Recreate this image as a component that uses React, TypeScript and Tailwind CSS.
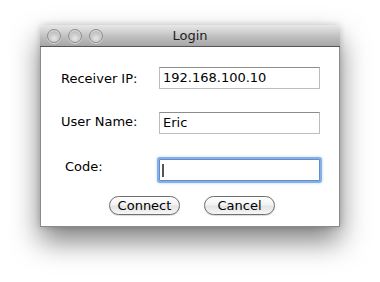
import React from "react";

const font = { fontFamily: '"DejaVu Sans", "Liberation Sans", sans-serif' };

function Light() {
  return (
    <div className="w-[14px] h-[14px] rounded-full border border-[#8e8e8e] bg-[radial-gradient(circle_at_50%_70%,#e6e6e6_0%,#c4c4c4_55%,#a9a9a9_100%)] shadow-[inset_0_1px_1px_rgba(255,255,255,0.6),0_1px_0_rgba(255,255,255,0.5)]" />
  );
}

function Field({ children, focused }: { children?: React.ReactNode; focused?: boolean }) {
  if (focused) {
    return (
      <div className="w-[161px] h-[22px] bg-white border border-[#5f8fd3] rounded-[1px] shadow-[0_0_0_2px_rgba(122,167,224,0.85),0_0_3px_2px_rgba(122,167,224,0.5)] flex items-center pl-[2px]">
        <div className="w-[2px] h-[13px] bg-[#555]" />
      </div>
    );
  }
  return (
    <div className="w-[161px] h-[22px] bg-white border border-[#bcbcbc] border-t-[#8c8c8c] flex items-center pl-[3px] text-[13px] leading-4 text-black">
      {children}
    </div>
  );
}

function Button({ label }: { label: string }) {
  return (
    <div className="w-[71px] h-[19px] rounded-full border border-[#6e6e6e] bg-[linear-gradient(#ffffff_0%,#f3f3f3_45%,#e4e4e4_55%,#f6f6f6_100%)] shadow-[0_1px_1px_rgba(0,0,0,0.15)] flex items-center justify-center text-[13px] leading-4 text-black">
      {label}
    </div>
  );
}

export default function App() {
  return (
    <div className="w-[380px] h-[282px] bg-white pt-[25px] pl-[40px]" style={font}>
      <div className="w-[300px] h-[202px] flex flex-col rounded-t-[4px] shadow-[0_14px_28px_rgba(0,0,0,0.5),0_0_6px_rgba(0,0,0,0.18)]">
        <div className="relative h-[22px] rounded-t-[4px] bg-[linear-gradient(#e8e8e8,#bdbdbd_60%,#a6a6a6)] border-b border-[#555] flex items-center pl-[7px] gap-[7px]">
          <Light />
          <Light />
          <Light />
          <div className="absolute inset-0 flex items-center justify-center text-[13px] leading-4 text-[#1e1e1e] pt-[1px]">
            Login
          </div>
        </div>
        <div className="flex-1 bg-white border-x border-b border-[#8a8a8a] flex flex-col pt-[20px]">
          <div className="flex items-start">
            <div className="w-[118px] pl-[20px] mt-[4px] text-[13px] leading-4 text-black">Receiver IP:</div>
            <Field>192.168.100.10</Field>
          </div>
          <div className="flex items-start mt-[23px]">
            <div className="w-[118px] pl-[20px] mt-[2px] text-[13px] leading-4 text-black">User Name:</div>
            <Field>Eric</Field>
          </div>
          <div className="flex items-start mt-[25px]">
            <div className="w-[118px] pl-[24px] mt-0 text-[13px] leading-4 text-black">Code:</div>
            <Field focused />
          </div>
          <div className="flex mt-[15px] pl-[68px] gap-[24px]">
            <Button label="Connect" />
            <Button label="Cancel" />
          </div>
        </div>
      </div>
    </div>
  );
}
